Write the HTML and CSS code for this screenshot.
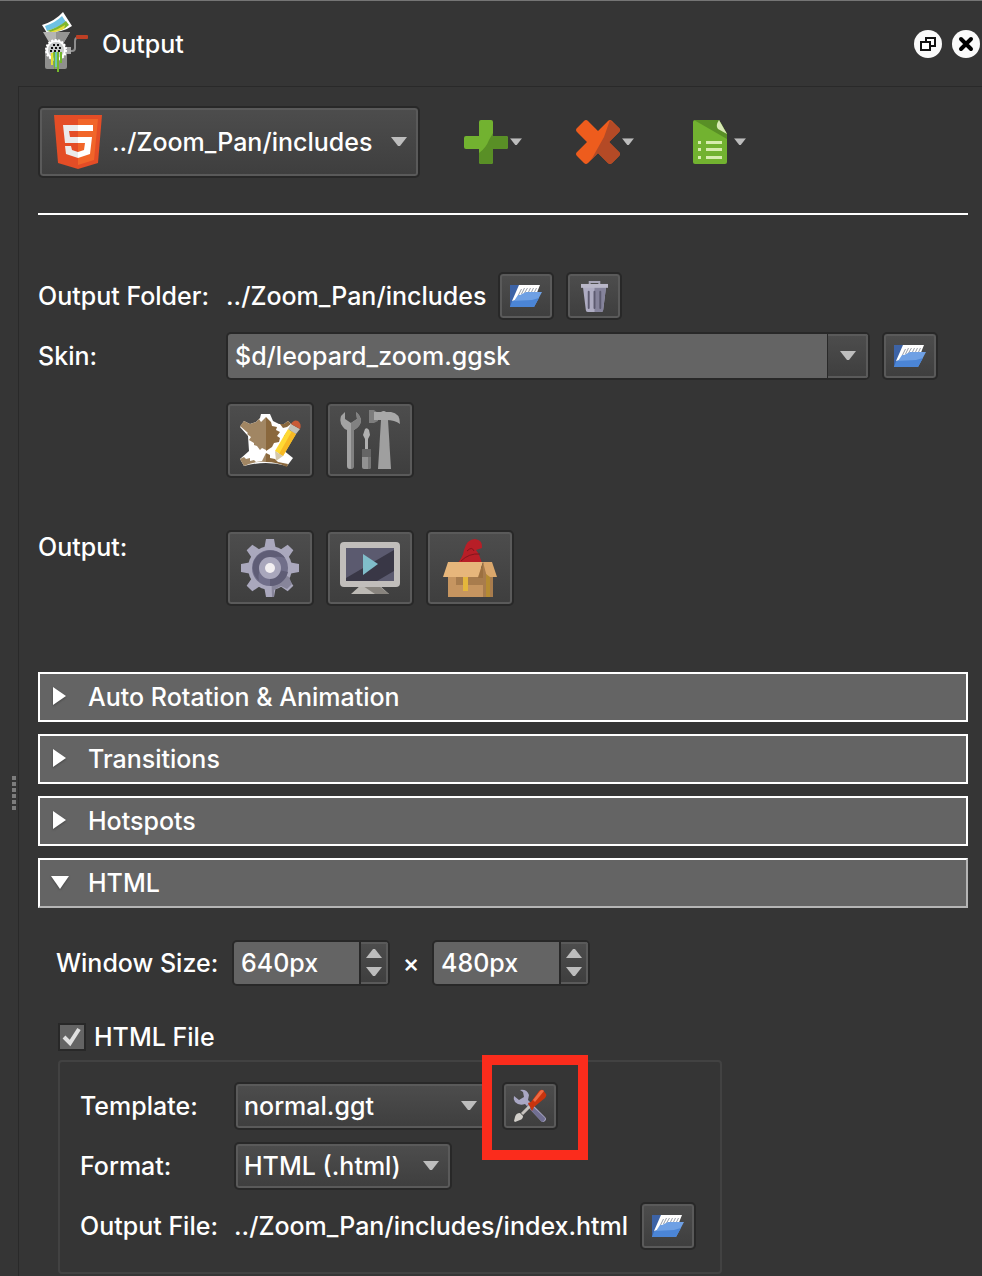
FILE: index.html
```html
<!DOCTYPE html>
<html lang="en">
<head>
    <meta charset="utf-8">
    <meta name="viewport" content="width=device-width, initial-scale=1">
    <title>Output</title>
    <link rel="stylesheet" href="styles.css">
</head>
<body>
    <!-- shared icons -->
    <svg class="defs" width="0" height="0">
        <symbol id="folder" viewBox="0 0 32 22">
            <path fill="#3d63a6" d="M0 0h10v14L0 22z"/>
            <path fill="#fff" d="M9 0h21l-4 10L2 16z"/>
            <path stroke="#8b919c" stroke-width=".9" fill="none" d="M11.500 4l-3 6M14.500 3l-3 6M17.500 3l-3 5M20.500 3l-2 4M23.500 3l-2 4M26.500 3l-2 4"/>
            <path fill="#6fa0e4" d="M10 10l6-3h16l-8 15H0l8-12z"/>
            <path fill="#4b85d6" d="M2 16l20-1 7-2-5 9H0z"/>
        </symbol>
        <symbol id="down" viewBox="0 0 16 10">
            <path fill="#bdbdbd" d="M0 0h16L9 9H7z"/>
        </symbol>
        <symbol id="up" viewBox="0 0 16 10">
            <path fill="#bdbdbd" d="M0 9h16L9 0H7z"/>
        </symbol>
    </svg>

    <header class="titlebar">
        <svg class="logo" width="48" height="64" viewBox="0 0 48 64">
            <path fill="#fff" d="M0 13Q13 9 21 0l9 14Q22 20 5 21z"/>
            <path fill="#6ec1e4" d="M3 14Q13 11 20 4l4 6Q17 15 5 19z"/>
            <path fill="#7fb62e" d="M5 19Q17 15 24 9l3 4q-6 6-18 7z"/>
            <path fill="#e6dc3c" d="M8 20q9-3 15-7l-1 4-9 3z"/>
            <path fill="#8f8f8d" d="M3 38h22v17q0 2-2 2H5q-2 0-2-2z"/>
            <path fill="#b5b5b3" d="M1 20h27l-7 12H8z"/>
            <path fill="#949492" d="M14 20h14l-7 12h-7z"/>
            <path fill="none" stroke="#8d8d8d" stroke-width="2" d="M27 39h3q3 0 3-3v-7q0-4 5-4"/>
            <path fill="#a9a9a9" d="M24 35h5v7h-5z"/>
            <rect x="34" y="23" width="12" height="4" rx="1" fill="#bd3f24"/>
            <circle cx="14" cy="38" r="10" fill="#fff" stroke="#fff" stroke-width="2" stroke-dasharray="2 1.500"/>
            <circle cx="14" cy="38" r="8" fill="#c9cbca"/>
            <path stroke="#111" stroke-width="2" stroke-dasharray="2 2" d="M11 33h8M9 36h11M8 39h12"/>
            <path fill="#6fc6b5" d="M13 40h3v15h-3z"/>
            <path fill="#e5df34" d="M9 41h2v12H9z"/>
            <path fill="#74b72b" d="M11 40h2v17h-1zM15 40h2v20h-2zM18 40h2v11h-2z"/>
        </svg>
        <h1>Output</h1>
        <div class="window-buttons">
            <button class="round" aria-label="Detach">
                <svg width="18" height="18" viewBox="0 0 18 18">
                    <path fill="#fff" stroke="#111" stroke-width="2" d="M7 3h9v8H7z"/>
                    <path fill="#fff" stroke="#111" stroke-width="2" d="M2 7h9v8H2z"/>
                </svg>
            </button>
            <button class="round" aria-label="Close">
                <svg width="18" height="18" viewBox="0 0 18 18">
                    <path stroke="#000" stroke-width="4" stroke-linecap="round" d="M4 4l10 10M14 4L4 14"/>
                </svg>
            </button>
        </div>
    </header>

    <div class="dock">
        <div class="splitter">
            <span></span><span></span><span></span><span></span><span></span><span></span>
        </div>
        <main class="panel">
            <div class="toolbar">
                <div class="combo large">
                    <svg class="html5" width="48" height="54" viewBox="0 0 48 54">
                        <path fill="#e44d26" d="M0 0h48l-4 48-20 6-20-6z"/>
                        <path fill="#f16529" d="M24 4h20l-4 41-16 5z"/>
                        <path fill="#ebebeb" d="M24 10H9l2 18h13v-6h-8l-1-6h9zM24 37l-6-2-1-4h-6l1 8 12 4z"/>
                        <path fill="#fff" d="M24 10h15v6H24zM24 22h14l-2 17-12 4v-6l6-2 1-7h-7z"/>
                    </svg>
                    <select aria-label="Output format">
                        <option>../Zoom_Pan/includes</option>
                    </select>
                    <svg class="arrow" width="16" height="10"><use href="#down"/></svg>
                </div>
                <button class="tool" aria-label="Add">
                    <svg width="44" height="44" viewBox="0 0 44 44">
                        <path fill="#72b230" d="M17 0h10q2 0 2 2v14h13q2 0 2 2v9q0 2-2 2H29v13q0 2-2 2H17q-2 0-2-2V29H2q-2 0-2-2v-9q0-2 2-2h13V2q0-2 2-2z"/>
                        <path fill="#598f26" d="M29 13v3h13q2 0 2 2v9q0 2-2 2H29v13q0 2-2 2H17q-2 0-2-2V33q7-5 10-13z"/>
                    </svg>
                    <svg width="12" height="8" viewBox="0 0 16 10"><use href="#down"/></svg>
                </button>
                <button class="tool" aria-label="Remove">
                    <svg width="44" height="44" viewBox="0 0 44 44">
                        <path fill="#ee5c1d" d="M8 1q2-2 4 0l10 10L32 1q2-2 4 0l7 7q2 2 0 4L33 22l10 10q2 2 0 4l-7 7q-2 2-4 0L22 33 12 43q-2 2-4 0l-7-7q-2-2 0-4l10-10L1 12q-2-2 0-4z"/>
                        <path fill="#b44a26" d="M34 0l9 8q2 2 0 4L33 22l10 10q2 2 0 4l-7 7q-2 2-4 0L22 33 11 44q4-3 8-11l9-16z"/>
                    </svg>
                    <svg width="12" height="8" viewBox="0 0 16 10"><use href="#down"/></svg>
                </button>
                <button class="tool" aria-label="Presets">
                    <svg width="44" height="44" viewBox="0 0 44 44">
                        <path fill="#72b230" d="M7 0h24l8 14v28q0 2-2 2H7q-2 0-2-2V2q0-2 2-2z"/>
                        <path fill="#598f26" d="M7 0h24l8 14v5L6 0z"/>
                        <path fill="#d7e8b4" d="M31 0l8 14-9-5q-3-3 1-9z"/>
                        <path fill="#d7ecae" d="M10 21h3v3h-3zM18 21h16v3H18zM10 28h3v3h-3zM18 28h16v3H18zM10 36h3v3h-3zM18 36h16v3H18z"/>
                    </svg>
                    <svg width="12" height="8" viewBox="0 0 16 10"><use href="#down"/></svg>
                </button>
            </div>

            <hr>

            <div class="form">
                <span class="label">Output Folder:</span>
                <div class="row">
                    <span class="path">../Zoom_Pan/includes</span>
                    <button class="btn" aria-label="Open folder"><svg width="32" height="22"><use href="#folder"/></svg></button>
                    <button class="btn" aria-label="Delete">
                        <svg width="27" height="33" viewBox="0 0 28 34">
                            <path fill="none" stroke="#a7a5b7" stroke-width="2" d="M9 5V2h10v3"/>
                            <path fill="#aeacc2" d="M2 7h24l-3 24q0 2-2 2H7q-2 0-2-2z"/>
                            <path fill="#85839b" d="M14 7h12l-3 24q0 2-2 2h-7z"/>
                            <path stroke="#5d5b70" stroke-width="2" stroke-linecap="round" d="M8 12v17M14 12v17M20 12v17"/>
                            <path fill="#b9b7c8" d="M0 4h28v4H0z"/>
                        </svg>
                    </button>
                </div>

                <label class="label" for="skin">Skin:</label>
                <div class="row">
                    <div class="field skin">
                        <input type="text" id="skin" value="$d/leopard_zoom.ggsk">
                        <button class="drop" aria-label="Show skins"><svg width="16" height="10"><use href="#down"/></svg></button>
                    </div>
                    <button class="btn" aria-label="Open skin"><svg width="32" height="22"><use href="#folder"/></svg></button>
                </div>

                <div class="row big-row">
                    <button class="btn big" aria-label="Edit skin">
                        <svg width="64" height="56" viewBox="0 0 64 56">
                            <path fill="#fff" d="M23 2h9l3 7 6 3h5l4-3 4 4-8 11-1 14 10 8-6 8q-21-6-43 0l-4-7 9-8-1-15-8-9 4-6 6 3 6-2 4-4z"/>
                            <path fill="#a18663" d="M6 9l6 3 6-2 3-3 2 3 5-5v33l-4-2-2 2-3-4-3-1v-2l-5-3 2-3-4-3 1-1-8-7zM2 47l4-2 2 2 4-1v3l4-1 2 2 6-1 4-8v9q-12-1-22 4z"/>
                            <path fill="#8a683d" d="M28 5l5 5 1 4 5 1-1 3 4 2-3 4 3 2-1 4-5 1-2 4-6 4zM42 12l4 0 4-3 3 3-4 3-4 1zM28 41l4 2v3l5 1 3 3 10 2-1 3q-10-5-21-5z"/>
                            <path fill="#ffd934" d="M50 17l8 5-13 22-8-5z"/>
                            <path fill="#f7b924" d="M54 19l4 3-13 22-4-2z"/>
                            <path fill="#d5c8aa" d="M37 39l8 5-7 5z"/>
                            <path fill="#c2bfb6" d="M53 12l9 5-4 5-8-5z"/>
                            <path fill="#c95a36" d="M53 12q3-5 7-3 4 3 2 8z"/>
                        </svg>
                    </button>
                    <button class="btn big" aria-label="Skin tools">
                        <svg width="60" height="60" viewBox="0 0 60 60">
                            <path fill="#a3a3a3" d="M5 2L1 6q-2 7 2 11 2 3 4 3v36q0 3 3 3t4-3V20q6-3 7-9 0-5-5-9l1 7-6 4-6-4z"/>
                            <path fill="#818181" d="M11 13l6-4-1-7q5 4 5 9-1 6-7 9v36q0 3-3 3z"/>
                            <path fill="#b0b0b0" d="M25 19q2-2 4 1l1 5-2 4v11h-3V29l-2-4z"/>
                            <path fill="#656565" d="M22 39h9v8h-9z"/>
                            <path fill="#929292" d="M22 47h9v10q0 2-2 2h-5q-2 0-2-2z"/>
                            <path fill="#767676" d="M28 47h3v10q0 2-3 2z"/>
                            <path fill="#9f9f9f" d="M41 10h7l3 49H38z"/>
                            <path fill="#7d7d7d" d="M29 0h5l4 3v8l-4 2h-5z"/>
                            <path fill="#a8a8a8" d="M34 2h7q3-2 5 0h5q9 1 9 12-5-4-14-4H34z"/>
                        </svg>
                    </button>
                </div>

                <span class="label top output-row">Output:</span>
                <div class="row output-row">
                    <button class="btn big" aria-label="Generate output">
                        <svg width="60" height="60" viewBox="0 0 60 60">
                            <g fill="#aaa8bd">
                                <path id="tooth" d="M26 1h8l2 11H24zM26 59h8l2-11H24z"/>
                                <use href="#tooth" transform="rotate(45 30 30)"/>
                                <use href="#tooth" transform="rotate(90 30 30)"/>
                                <use href="#tooth" transform="rotate(135 30 30)"/>
                                <circle cx="30" cy="30" r="22"/>
                            </g>
                            <path fill="#87859a" d="M31 30l18 9 3 7-5 5-6-3-7 4v7h-2z"/>
                            <circle cx="30" cy="30" r="18" fill="#716f8a"/>
                            <path fill="#5f5d76" d="M14 23a18 18 0 0 1 31-3 20 20 0 0 0-26 23 18 18 0 0 1-5-20zM30 30l18 4a18 18 0 0 1-18 14z"/>
                            <circle cx="30" cy="30" r="11" fill="#a9a7bc"/>
                            <circle cx="30" cy="30" r="5" fill="#f3f0f2"/>
                        </svg>
                    </button>
                    <button class="btn big" aria-label="Open output">
                        <svg width="60" height="52" viewBox="0 0 60 52">
                            <path fill="#bcb9b4" d="M21 43h18l10 9H11z"/>
                            <path fill="#88847e" d="M23 44h16l10 8H35z"/>
                            <rect width="60" height="45" rx="4" fill="#c1bebb"/>
                            <path fill="#5b5a6f" d="M6 6h48v33H6z"/>
                            <path fill="#393746" d="M54 8v21L37 39H6v-3z"/>
                            <path fill="#80bdca" d="M23 12l15 10-15 11z"/>
                        </svg>
                    </button>
                    <button class="btn big" aria-label="Create package">
                        <svg width="54" height="60" viewBox="0 0 54 60">
                            <path fill="#b81e27" d="M14 26q6-7 7-14 3-11 11-11 8 1 7 9l-6 2q4 5 6 14z"/>
                            <path fill="none" stroke="#82151c" d="M18 23q8-8 19-7M24 13q5-5 7 0"/>
                            <path fill="#c69560" d="M5 30h45v29H5z"/>
                            <path fill="#a87c4d" d="M40 25l10 14v20H40zM13 39h27v8H13z"/>
                            <path fill="#e7b67b" d="M5 24h35l-5 15H0z"/>
                            <path fill="#9c7040" d="M40 24v16h-5z"/>
                            <path fill="#daa76c" d="M40 24h9l5 15H44z"/>
                            <path fill="#e4b63c" d="M20 39h5v14h-5z"/>
                            <path fill="#b58b32" d="M43 36l4 3v20h-4z"/>
                        </svg>
                    </button>
                </div>
            </div>

            <div class="sections">
                <button class="section">
                    <svg width="20" height="20" viewBox="0 0 20 20"><path fill="#fff" d="M3 1l13 9-13 9z"/></svg>
                    Auto Rotation &amp; Animation
                </button>
                <button class="section">
                    <svg width="20" height="20" viewBox="0 0 20 20"><path fill="#fff" d="M3 1l13 9-13 9z"/></svg>
                    Transitions
                </button>
                <button class="section">
                    <svg width="20" height="20" viewBox="0 0 20 20"><path fill="#fff" d="M3 1l13 9-13 9z"/></svg>
                    Hotspots
                </button>
                <button class="section open" aria-expanded="true">
                    <svg width="20" height="20" viewBox="0 0 20 20"><path fill="#fff" d="M1 4h18l-9 13z"/></svg>
                    HTML
                </button>
            </div>

            <div class="html-settings">
                <div class="size-row">
                    <label for="width">Window Size:</label>
                    <div class="field spin">
                        <input type="text" id="width" value="640px">
                        <div class="steps">
                            <button aria-label="Increase width"><svg width="16" height="10"><use href="#up"/></svg></button>
                            <button aria-label="Decrease width"><svg width="16" height="10"><use href="#down"/></svg></button>
                        </div>
                    </div>
                    <span class="times">×</span>
                    <div class="field spin">
                        <input type="text" id="height" aria-label="Window height" value="480px">
                        <div class="steps">
                            <button aria-label="Increase height"><svg width="16" height="10"><use href="#up"/></svg></button>
                            <button aria-label="Decrease height"><svg width="16" height="10"><use href="#down"/></svg></button>
                        </div>
                    </div>
                </div>

                <div class="check">
                    <span class="check-box">
                        <input type="checkbox" id="html-file" checked>
                        <svg width="20" height="20" viewBox="0 0 20 20"><path fill="none" stroke="#e0e0e0" stroke-width="4" d="M2 10l6 6L17 2"/></svg>
                    </span>
                    <label for="html-file">HTML File</label>
                </div>

                <div class="group">
                    <label for="template">Template:</label>
                    <div class="row">
                        <div class="combo template">
                            <select id="template"><option>normal.ggt</option></select>
                            <svg class="arrow" width="16" height="10"><use href="#down"/></svg>
                        </div>
                        <div class="highlight">
                            <button class="btn" aria-label="Template settings">
                                <svg width="34" height="34" viewBox="0 0 34 34">
                                    <path fill="#a9a7c4" d="M7 1q7-1 9 5l-1 5 17 17q2 2 0 4t-4 0L12 15q-6 2-10-2-2-3-1-6l5 4 5-3-1-5z"/>
                                    <path fill="#716f92" d="M14 17l2-3 16 15q0 3-3 4z"/>
                                    <path stroke="#c5c1bd" stroke-width="3" d="M17 17L9 25"/>
                                    <path fill="#d2cfca" d="M7 24l3 3q0 3-3 4l-5 2-1-1 1-4q1-4 5-4z"/>
                                    <path fill="#c8340e" d="M15 14l3-1 8-11q2-2 4-1l3 4q1 1-1 4L21 18l-2 4z"/>
                                    <path fill="#ef6a43" d="M20 11l7-9q2-2 4 0L22 13z"/>
                                </svg>
                            </button>
                        </div>
                    </div>

                    <label for="format">Format:</label>
                    <div class="row">
                        <div class="combo format">
                            <select id="format"><option>HTML (.html)</option></select>
                            <svg class="arrow" width="16" height="10"><use href="#down"/></svg>
                        </div>
                    </div>

                    <span>Output File:</span>
                    <div class="row">
                        <span class="path">../Zoom_Pan/includes/index.html</span>
                        <button class="btn" aria-label="Choose output file"><svg width="32" height="22"><use href="#folder"/></svg></button>
                    </div>
                </div>
            </div>
        </main>
    </div>
</body>
</html>
```
FILE: styles.css
```css
* {
    box-sizing: border-box;
}

body {
    margin: 0;
    min-height: 100vh;
    display: flex;
    flex-direction: column;
    background-color: #353535;
    border-top: 1px solid #757575;
    color: white;
    font-family: Inter, "Liberation Sans", sans-serif;
    font-size: 25px;
    font-weight: 500;
    line-height: 30px;
}

button, input, select {
    font: inherit;
    color: inherit;
    margin: 0;
    padding: 0;
    border: none;
    background: none;
}

svg {
    display: block;
    flex-shrink: 0;
}

.defs {
    position: absolute;
}

/* title bar */
.titlebar {
    display: flex;
    align-items: center;
    height: 85px;
    padding: 0 2px 0 42px;
}

.titlebar h1 {
    margin: 0 0 0 12px;
    font-size: 25px;
    font-weight: 500;
}

.window-buttons {
    display: flex;
    gap: 10px;
    margin-left: auto;
}

.round {
    display: flex;
    align-items: center;
    justify-content: center;
    width: 28px;
    height: 28px;
    border-radius: 50%;
    background-color: #fafafa;
}

/* dock */
.dock {
    display: flex;
    flex: 1;
}

.splitter {
    display: flex;
    flex-direction: column;
    align-items: flex-end;
    gap: 2px;
    width: 18px;
    padding: 690px 2px 0 0;
}

.splitter span {
    width: 4px;
    height: 4px;
    background-color: #7d7d7d;
}

.panel {
    flex: 1;
    min-width: 0;
    padding: 19px 14px 2px 19px;
    border-top: 1px solid #292929;
    border-left: 1px solid #292929;
}

.toolbar {
    display: flex;
    align-items: center;
    gap: 54px;
}

.tool {
    display: flex;
    align-items: center;
    gap: 2px;
}

hr {
    height: 2px;
    margin: 35px 0 57px;
    border: none;
    background-color: white;
}

/* buttons and drop-downs */
.btn, .combo {
    display: flex;
    align-items: center;
    height: 48px;
    border: 2px solid #282828;
    border-radius: 5px;
    background: linear-gradient(#4d4d4d, #3e3e3e);
    box-shadow: inset 0 0 0 2px #5a5a5a;
}

.btn {
    justify-content: center;
    flex-shrink: 0;
    width: 56px;
}

.btn.big {
    width: 88px;
    height: 76px;
}

.combo {
    position: relative;
    padding-left: 8px;
}

.combo select {
    flex: 1;
    min-width: 0;
    height: 100%;
    padding-right: 30px;
    appearance: none;
}

.combo option {
    background-color: #3e3e3e;
}

.combo .arrow {
    position: absolute;
    right: 11px;
    pointer-events: none;
}

.combo.large {
    width: 382px;
    height: 72px;
    margin-right: -10px;
    padding-left: 14px;
}

.html5 {
    margin-right: 10px;
}

.template {
    width: 256px;
}

.format {
    width: 218px;
}

.row {
    display: flex;
    align-items: center;
    gap: 12px;
    min-height: 48px;
}

/* top form */
.form {
    display: grid;
    grid-template-columns: 188px 1fr;
    align-items: center;
    row-gap: 12px;
}

.big-row {
    grid-column: 2;
    margin-top: 10px;
}

.output-row {
    margin-top: 40px;
}

.label.top {
    align-self: start;
    padding-top: 2px;
}

/* text fields */
.field {
    display: flex;
    height: 48px;
    border: 2px solid #282828;
    border-radius: 5px;
    background-color: #646464;
    overflow: hidden;
}

.field input {
    flex: 1;
    min-width: 0;
    padding-left: 7px;
}

.skin {
    flex: 1;
    max-width: 644px;
}

.drop {
    display: flex;
    align-items: center;
    justify-content: center;
    width: 41px;
    border-left: 1px solid #282828;
    background: linear-gradient(#4d4d4d, #3e3e3e);
    box-shadow: inset -2px 0 #5a5a5a, inset 0 2px #5a5a5a, inset 0 -2px #5a5a5a;
}

.spin {
    width: 158px;
    height: 46px;
}

.steps {
    display: flex;
    flex-direction: column;
    width: 29px;
    padding: 3px 2px 3px 0;
    border-left: 2px solid #282828;
    background: linear-gradient(#4d4d4d, #3e3e3e);
    box-shadow: inset -2px 0 #5a5a5a, inset 0 2px #5a5a5a, inset 0 -2px #5a5a5a;
}

.steps button {
    display: flex;
    flex: 1;
    align-items: center;
    justify-content: center;
}

/* collapsible sections */
.sections {
    display: flex;
    flex-direction: column;
    gap: 12px;
    margin-top: 66px;
}

.section {
    display: flex;
    align-items: center;
    gap: 18px;
    height: 50px;
    padding-left: 10px;
    border: 2px solid white;
    background-color: #646464;
    text-align: left;
}

.section svg {
    margin-bottom: 3px;
    filter: drop-shadow(0 1px 1px #444);
}

.section.open {
    border-right-color: #b5b5b5;
    border-bottom-color: #b5b5b5;
}

/* html settings */
.html-settings {
    padding: 32px 20px 0;
}

.size-row {
    display: flex;
    align-items: center;
}

.size-row label {
    width: 176px;
    margin-left: -2px;
}

.times {
    width: 42px;
    text-align: center;
}

.check {
    display: flex;
    align-items: center;
    gap: 8px;
    margin-top: 36px;
}

.check-box {
    position: relative;
    width: 28px;
    height: 28px;
}

.check input {
    display: block;
    width: 28px;
    height: 28px;
    appearance: none;
    border: 2px solid #282828;
    background-color: #646464;
}

.check svg {
    position: absolute;
    top: 4px;
    left: 4px;
    pointer-events: none;
    visibility: hidden;
}

.check input:checked + svg {
    visibility: visible;
}

.group {
    display: grid;
    grid-template-columns: 154px 1fr;
    align-items: center;
    row-gap: 12px;
    max-width: 664px;
    margin-top: 8px;
    padding: 20px 20px 22px;
    border: 2px solid #424242;
    border-radius: 4px;
}

.highlight {
    position: relative;
}

.highlight::after {
    content: "";
    position: absolute;
    top: -27px;
    right: -30px;
    bottom: -30px;
    left: -20px;
    border: 10px solid #fb2c1c;
    pointer-events: none;
}
```
